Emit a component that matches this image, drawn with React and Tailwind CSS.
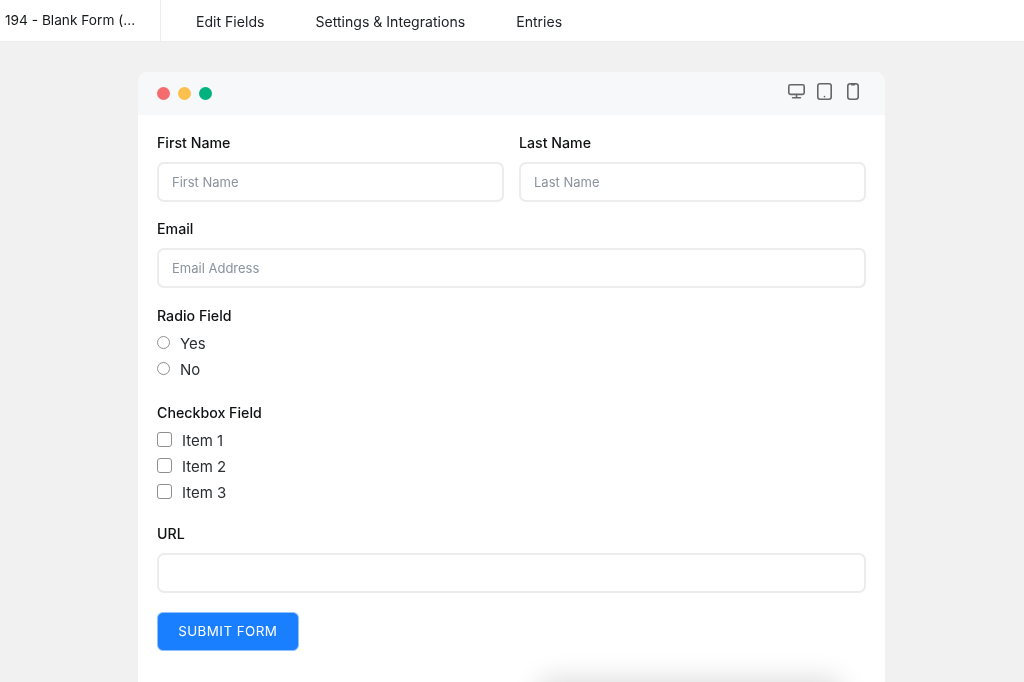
import React from "react";

function Label({ children, className = "" }) {
  return <div className={`text-[14.2px] leading-[20px] font-medium text-[#0f1113] ${className}`}>{children}</div>;
}

function Field({ label, placeholder, className = "" }) {
  return (
    <div className={className}>
      <Label className="mb-[9px]">{label}</Label>
      <div className="h-[39.5px] rounded-[7px] border-2 border-[#ebeced] bg-white pl-[13px] pt-[1px] flex items-center text-[13px] text-[#8a939e]">
        {placeholder}
      </div>
    </div>
  );
}

function Monitor() {
  return (
    <svg width="17" height="15" viewBox="0 0 17 15" fill="none" stroke="#666666" strokeWidth="1.6" strokeLinecap="round" strokeLinejoin="round">
      <rect x="0.8" y="0.8" width="15.4" height="9.6" rx="1.6" />
      <path d="M8.5 10.6V13.6M4.6 13.8H12.4" />
    </svg>
  );
}

function Tablet() {
  return (
    <svg width="15" height="17" viewBox="0 0 15 17" fill="none" stroke="#666666" strokeWidth="1.6" strokeLinecap="round">
      <rect x="0.8" y="0.8" width="13.4" height="15.4" rx="2.2" />
      <path d="M7.5 13.5V13.7" />
    </svg>
  );
}

function Phone() {
  return (
    <svg width="12" height="17" viewBox="0 0 12 17" fill="none" stroke="#666666" strokeWidth="1.6" strokeLinecap="round">
      <rect x="0.8" y="0.8" width="10.4" height="15.4" rx="2.4" />
      <path d="M4.4 1.6H7.6" />
    </svg>
  );
}

function Radio({ label }) {
  return (
    <div className="flex items-center h-[26px]">
      <span className="w-[13px] h-[13px] rounded-full border border-[#8f8f8f] bg-white mb-[3px]" />
      <span className="ml-[10px] text-[15px] text-[#2b2f33]">{label}</span>
    </div>
  );
}

function Check({ label }) {
  return (
    <div className="flex items-center h-[26px]">
      <span className="w-[15px] h-[15px] rounded-[3px] border border-[#8f8f8f] bg-white mb-[3px]" />
      <span className="ml-[10px] text-[15px] text-[#2b2f33]">{label}</span>
    </div>
  );
}

export default function App() {
  return (
    <div className="relative h-[682px] w-[1024px] overflow-hidden bg-[#f1f1f1] font-['Inter',sans-serif] blur-[0.35px]">
      <div className="flex h-[42px] bg-white border-b border-[#ececec]">
        <div className="w-[161px] border-r border-[#ececec] pl-[5px] pt-[10px] text-[13.7px] leading-[20px] text-[#16181a]">
          194 - Blank Form (...
        </div>
        <div className="flex gap-[51px] pl-[35px] pt-[12px] text-[14.08px] leading-[20px] text-[#202327]">
          <span>Edit Fields</span>
          <span>Settings &amp; Integrations</span>
          <span>Entries</span>
        </div>
      </div>

      <div className="ml-[138px] mt-[30px] w-[747px] h-[640px] rounded-t-[10px] bg-white">
        <div className="h-[43px] rounded-t-[10px] bg-[#f7f8fa] flex items-center justify-between pl-[19px] pr-[26px]">
          <div className="flex gap-[8px]">
            <span className="w-[13px] h-[13px] rounded-full bg-[#f56c6f]" />
            <span className="w-[13px] h-[13px] rounded-full bg-[#fdbf4d]" />
            <span className="w-[13px] h-[13px] rounded-full bg-[#00b27f]" />
          </div>
          <div className="flex items-center pb-[4px]">
            <Monitor />
            <span className="ml-[12px]"><Tablet /></span>
            <span className="ml-[15px]"><Phone /></span>
          </div>
        </div>

        <div className="px-[19px] pt-[18px]">
          <div className="flex gap-[15px]">
            <Field className="flex-1" label="First Name" placeholder="First Name" />
            <Field className="flex-1" label="Last Name" placeholder="Last Name" />
          </div>
          <Field className="mt-[17.5px]" label="Email" placeholder="Email Address" />
          <Label className="mt-[18.5px] mb-[5px]">Radio Field</Label>
          <Radio label="Yes" />
          <Radio label="No" />
          <Label className="mt-[20px] mb-[5px]">Checkbox Field</Label>
          <Check label="Item 1" />
          <Check label="Item 2" />
          <Check label="Item 3" />
          <Field className="mt-[18px]" label="URL" placeholder="" />
          <div className="mt-[19.5px] w-[141.5px] h-[38.5px] rounded-[6px] border border-[#8fc1ff] bg-[#1a7fff] flex items-center justify-center text-[13.4px] tracking-[0.45px] text-white">
            SUBMIT FORM
          </div>
        </div>
      </div>

      <div className="absolute left-[545px] top-[687px] w-[290px] h-[40px] rounded-[8px] bg-white shadow-[0_0_28px_8px_rgba(0,0,0,0.14)]" />
    </div>
  );
}
